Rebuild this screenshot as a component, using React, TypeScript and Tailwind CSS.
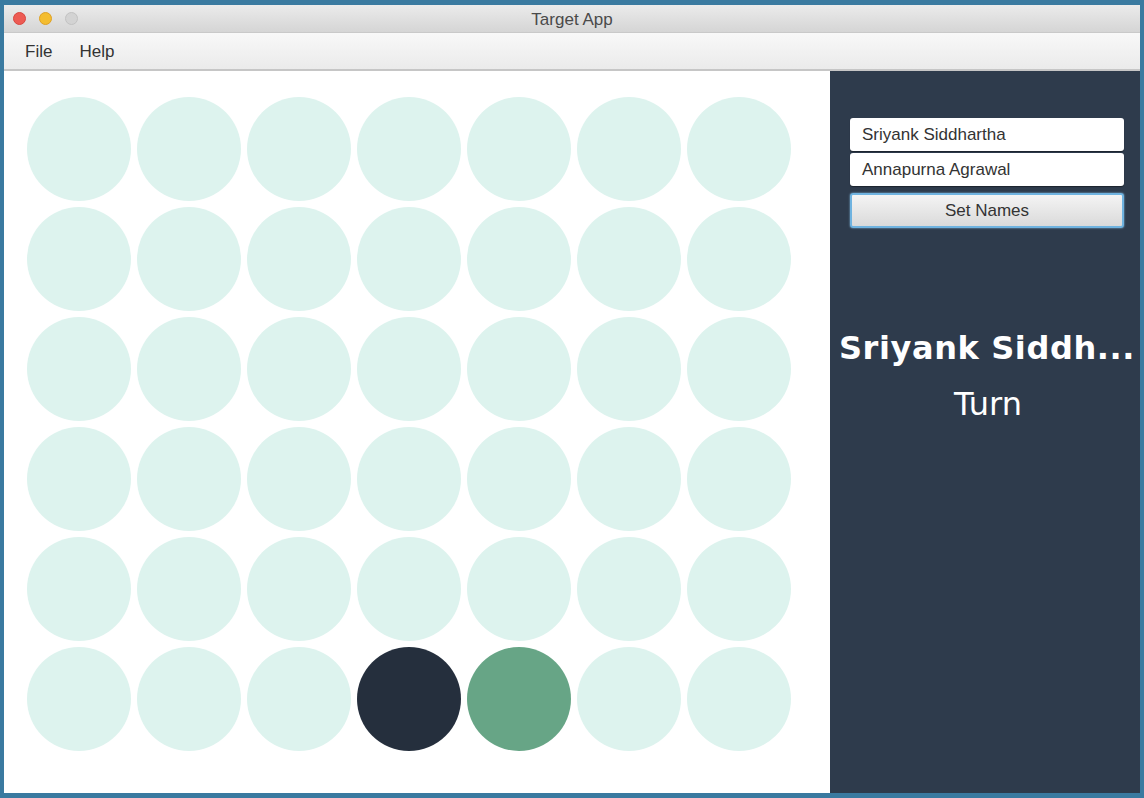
import { FC } from "react";

// 0 = empty, 1 = dark player, 2 = green player
const board: number[][] = [
  [0, 0, 0, 0, 0, 0, 0],
  [0, 0, 0, 0, 0, 0, 0],
  [0, 0, 0, 0, 0, 0, 0],
  [0, 0, 0, 0, 0, 0, 0],
  [0, 0, 0, 0, 0, 0, 0],
  [0, 0, 0, 1, 2, 0, 0],
];

const discClass = (v: number) => {
  if (v === 1) return "bg-[#252f3d]";
  if (v === 2) return "bg-[#67a586]";
  return "bg-[#ddf3ee]";
};

const App: FC = () => {
  return (
    <div className="w-[1144px] h-[798px] bg-[#3a7aa0] pt-[5px] pb-[5px] px-[4px] font-['Liberation_Sans',Arial,sans-serif]">
      <div className="flex flex-col h-full w-full bg-white overflow-hidden">
        {/* title bar */}
        <div className="relative h-[27px] shrink-0 bg-gradient-to-b from-[#ebebeb] to-[#d5d5d5] flex items-center justify-center pt-[2px]">
          <div className="absolute left-[9px] top-[7px] flex gap-[13px]">
            <span className="w-[13px] h-[13px] rounded-full bg-[#ed5b53] border border-[#d8463f]" />
            <span className="w-[13px] h-[13px] rounded-full bg-[#f4bd30] border border-[#dea125]" />
            <span className="w-[13px] h-[13px] rounded-full bg-[#d3d3d3] border border-[#c2c2c2]" />
          </div>
          <span className="text-[17px] text-[#4a4a4a] leading-none">Target App</span>
        </div>
        {/* menu bar */}
        <div className="h-[39px] shrink-0 bg-gradient-to-b from-[#f8f8f8] to-[#ebebeb] border-t border-[#c9c9c9] border-b-2 border-b-[#c6c6c6] flex items-center gap-[27px] pl-[21px] pt-[2px] text-[17px] text-[#333]">
          <span>File</span>
          <span>Help</span>
        </div>
        {/* content */}
        <div className="flex flex-1 min-h-0">
          <div className="w-[826px] shrink-0 bg-white pl-[23px] pt-[26px]">
            <div className="grid grid-cols-[repeat(7,104px)] gap-[6px]">
              {board.flat().map((v, i) => (
                <div key={i} className={`w-[104px] h-[104px] rounded-full ${discClass(v)}`} />
              ))}
            </div>
          </div>
          <div className="w-[310px] shrink-0 bg-[#2e3b4c] flex flex-col pt-[47px]">
            <div className="flex flex-col pl-[20px] pr-[16px]">
              <div className="h-[33px] bg-white rounded-[3px] shadow-[0_1px_1px_rgba(0,0,0,0.4)] flex items-center px-[12px] text-[17px] text-[#333]">
                Sriyank Siddhartha
              </div>
              <div className="mt-[2px] h-[33px] bg-white rounded-[3px] shadow-[0_1px_1px_rgba(0,0,0,0.4)] flex items-center px-[12px] text-[17px] text-[#333]">
                Annapurna Agrawal
              </div>
              <button className="mt-[7px] h-[35px] rounded-[3px] border-2 border-[#6fb3e0] bg-gradient-to-b from-[#f4f4f4] to-[#dadada] text-[17px] text-[#333] shadow-[0_0_2px_#8cc5ec]">
                Set Names
              </button>
            </div>
            <div className="mt-[100px] pl-[4px] h-[40px] leading-[40px] text-center text-white font-bold text-[32px] tracking-[0.6px] font-['DejaVu_Sans',sans-serif] whitespace-nowrap">
              Sriyank Siddh...
            </div>
            <div className="mt-[16px] pl-[6px] h-[40px] leading-[40px] text-center text-white text-[32px] font-['DejaVu_Sans',sans-serif]">
              Turn
            </div>
          </div>
        </div>
      </div>
    </div>
  );
};

export default App;
